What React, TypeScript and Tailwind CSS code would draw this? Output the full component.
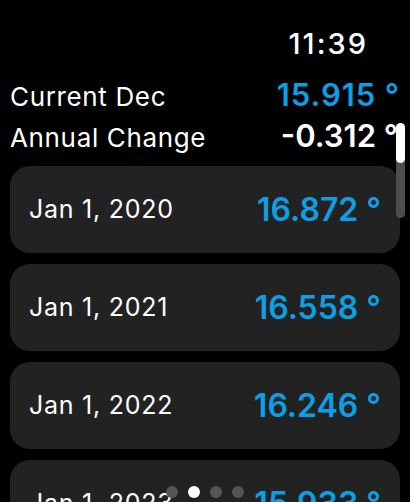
import React from "react";

const rows = [
  { date: "Jan 1, 2020", value: "16.872 °" },
  { date: "Jan 1, 2021", value: "16.558 °" },
  { date: "Jan 1, 2022", value: "16.246 °" },
  { date: "Jan 1, 2023", value: "15.933 °" },
];

export default function App() {
  return (
    <div
      className="relative w-[410px] h-[502px] overflow-hidden bg-black text-white"
      style={{ fontFamily: "Inter, 'Noto Sans', sans-serif" }}
    >
      <div className="flex justify-end pr-[42px] pt-[29px]">
        <span className="text-[29px] leading-none font-medium tracking-[0.07em]">11:39</span>
      </div>

      <div className="mt-[21px] px-[10px]">
        <div className="flex h-[41px] items-baseline justify-between">
          <span className="text-[26px] leading-none tracking-[0.025em]">Current Dec</span>
          <span className="text-[31px] leading-none font-semibold tracking-[0.03em] text-[#0b9fe4]">15.915 °</span>
        </div>
        <div className="flex h-[41px] items-baseline justify-between pr-[2px]">
          <span className="text-[26px] leading-none tracking-[0.025em]">Annual Change</span>
          <span className="text-[31px] leading-none font-semibold">-0.312 °</span>
        </div>
      </div>

      <div className="mt-[5px] flex flex-col gap-[11px] px-[10px]">
        {rows.map((r) => (
          <div
            key={r.date}
            className="flex h-[87px] shrink-0 items-center justify-between rounded-[20px] bg-[#222222] px-[19px]"
          >
            <span className="text-[25px] leading-none tracking-[0.03em]">{r.date}</span>
            <span className="text-[32px] leading-none font-semibold text-[#0b9fe4]">{r.value}</span>
          </div>
        ))}
      </div>

      {/* scroll indicator */}
      <div className="absolute left-[396px] top-[123px] h-[95px] w-[9px] rounded-full bg-[#4d4d4d]">
        <div className="h-[40px] w-[9px] rounded-full bg-white" />
      </div>

      {/* page dots */}
      <div className="absolute bottom-[4px] left-0 right-0 flex justify-center gap-[10px]">
        <div className="h-[12px] w-[12px] rounded-full bg-[#555555]" />
        <div className="h-[12px] w-[12px] rounded-full bg-white" />
        <div className="h-[12px] w-[12px] rounded-full bg-[#555555]" />
        <div className="h-[12px] w-[12px] rounded-full bg-[#555555]" />
      </div>
    </div>
  );
}
